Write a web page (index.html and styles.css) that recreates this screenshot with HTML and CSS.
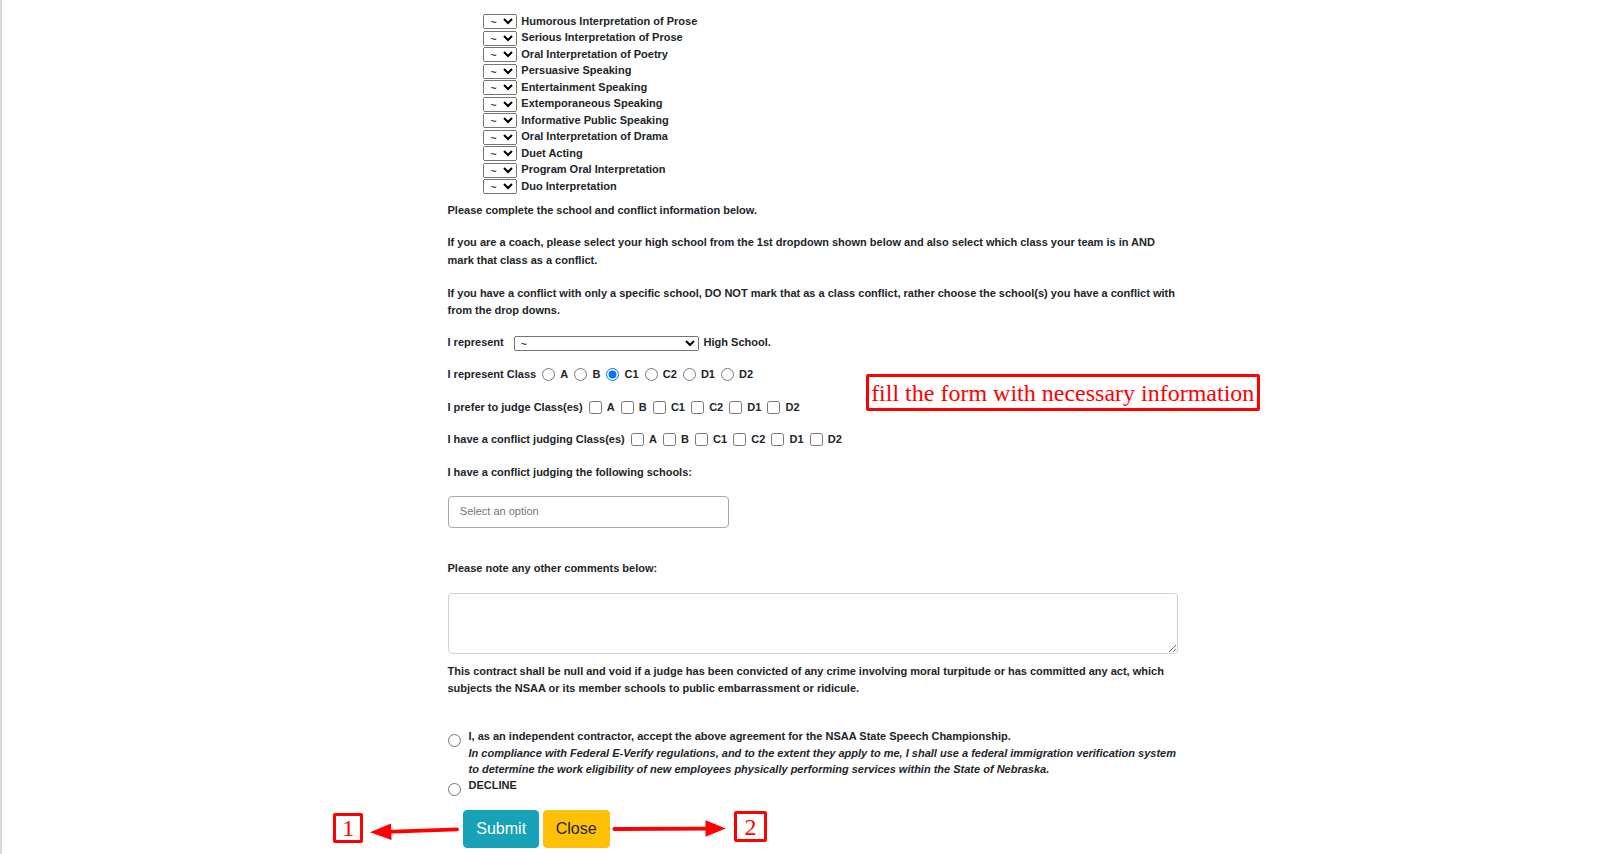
FILE: index.html
```html
<!DOCTYPE html>
<html lang="en">
<head>
<meta charset="utf-8">
<title>Judge Contract</title>
<link rel="stylesheet" href="styles.css">
</head>
<body>
<div class="page">
  <ul class="events">
    <li class="event"><select class="mini"><option>~</option></select><span>Humorous Interpretation of Prose</span></li>
    <li class="event"><select class="mini"><option>~</option></select><span>Serious Interpretation of Prose</span></li>
    <li class="event"><select class="mini"><option>~</option></select><span>Oral Interpretation of Poetry</span></li>
    <li class="event"><select class="mini"><option>~</option></select><span>Persuasive Speaking</span></li>
    <li class="event"><select class="mini"><option>~</option></select><span>Entertainment Speaking</span></li>
    <li class="event"><select class="mini"><option>~</option></select><span>Extemporaneous Speaking</span></li>
    <li class="event"><select class="mini"><option>~</option></select><span>Informative Public Speaking</span></li>
    <li class="event"><select class="mini"><option>~</option></select><span>Oral Interpretation of Drama</span></li>
    <li class="event"><select class="mini"><option>~</option></select><span>Duet Acting</span></li>
    <li class="event"><select class="mini"><option>~</option></select><span>Program Oral Interpretation</span></li>
    <li class="event"><select class="mini"><option>~</option></select><span>Duo Interpretation</span></li>
  </ul>

  <p class="para">Please complete the school and conflict information below.</p>
  <p class="para">If you are a coach, please select your high school from the 1st dropdown shown below and also select which class your team is in AND<br>mark that class as a conflict.</p>
  <p class="para tight">If you have a conflict with only a specific school, DO NOT mark that as a class conflict, rather choose the school(s) you have a conflict with<br>from the drop downs.</p>

  <div class="row row-school">
    <span>I represent</span>
    <select class="school"><option>~</option></select>
    <span class="after">High School.</span>
  </div>

  <div class="row">
    <span>I represent Class</span>
    <label class="opt"><input type="radio" name="cls"><span>A</span></label>
    <label class="opt"><input type="radio" name="cls"><span>B</span></label>
    <label class="opt"><input type="radio" name="cls" checked><span>C1</span></label>
    <label class="opt"><input type="radio" name="cls"><span>C2</span></label>
    <label class="opt"><input type="radio" name="cls"><span>D1</span></label>
    <label class="opt"><input type="radio" name="cls"><span>D2</span></label>
  </div>

  <div class="row">
    <span>I prefer to judge Class(es)</span>
    <label class="opt"><input type="checkbox"><span>A</span></label>
    <label class="opt"><input type="checkbox"><span>B</span></label>
    <label class="opt"><input type="checkbox"><span>C1</span></label>
    <label class="opt"><input type="checkbox"><span>C2</span></label>
    <label class="opt"><input type="checkbox"><span>D1</span></label>
    <label class="opt"><input type="checkbox"><span>D2</span></label>
  </div>

  <div class="row">
    <span>I have a conflict judging Class(es)</span>
    <label class="opt"><input type="checkbox"><span>A</span></label>
    <label class="opt"><input type="checkbox"><span>B</span></label>
    <label class="opt"><input type="checkbox"><span>C1</span></label>
    <label class="opt"><input type="checkbox"><span>C2</span></label>
    <label class="opt"><input type="checkbox"><span>D1</span></label>
    <label class="opt"><input type="checkbox"><span>D2</span></label>
  </div>

  <p class="para">I have a conflict judging the following schools:</p>

  <div class="multi"><span>Select an option</span></div>

  <p class="para">Please note any other comments below:</p>

  <textarea class="comments"></textarea>

  <p class="para contract">This contract shall be null and void if a judge has been convicted of any crime involving moral turpitude or has committed any act, which<br>subjects the NSAA or its member schools to public embarrassment or ridicule.</p>

  <div class="agree">
    <input type="radio" name="agree" class="agree-radio">
    <div class="agree-text">
      <div>I, as an independent contractor, accept the above agreement for the NSAA State Speech Championship.</div>
      <div class="ital">In compliance with Federal E-Verify regulations, and to the extent they apply to me, I shall use a federal immigration verification system<br>to determine the work eligibility of new employees physically performing services within the State of Nebraska.</div>
    </div>
  </div>
  <div class="agree decline">
    <input type="radio" name="agree" class="agree-radio">
    <div class="agree-text">
      <div>DECLINE</div>
    </div>
  </div>

  <div class="actions">
    <button class="btn btn-submit" type="button">Submit</button>
    <button class="btn btn-close" type="button">Close</button>
  </div>
</div>

<div class="overlay">
  <div class="note note-main">fill the form with necessary information</div>
  <div class="note note-num note-1">1</div>
  <div class="note note-num note-2">2</div>
  <svg class="arrows" width="1621" height="854" viewBox="0 0 1621 854">
    <line x1="455" y1="829.3" x2="384" y2="831.8" stroke="#ff0000" stroke-width="3.8" stroke-linecap="round"/>
    <polygon points="368,832.3 389,823.5 389.5,840" fill="#ff0000"/>
    <line x1="612.3" y1="829" x2="708" y2="828.6" stroke="#ff0000" stroke-width="3.8" stroke-linecap="round"/>
    <polygon points="723.7,828.5 703.5,820.2 703.5,836.8" fill="#ff0000"/>
  </svg>
</div>
</body>
</html>
```

FILE: styles.css
```css
html, body {
  margin: 0;
  padding: 0;
}

body {
  position: relative;
  min-height: 854px;
  background: #ffffff;
  border-left: 2px solid #dadada;
  font-family: "Liberation Sans", Arial, sans-serif;
  font-size: 11px;
  font-weight: bold;
  line-height: 17.6px;
  color: #212529;
}

.page {
  width: 730px;
  margin: 0 auto;
  padding-top: 13.25px;
}

.events {
  list-style: none;
  margin: 0 0 7.1px 35.8px;
  padding: 0;
}

.event {
  display: flex;
  align-items: center;
  height: 16.5px;
  gap: 4px;
}

.mini {
  width: 34px;
  height: 15px;
  margin: 0;
  padding: 0 0 0 2px;
  font-family: "Liberation Sans", Arial, sans-serif;
  font-size: 11px;
  font-weight: normal;
  color: #000;
}

.para {
  margin: 0 0 15px;
}

.tight {
  margin-bottom: 14.5px;
}

.row {
  display: flex;
  align-items: center;
  height: 17.6px;
  margin: 0 0 15px;
}

.row-school {
  margin-bottom: 14px;
}

.school {
  width: 185px;
  height: 15px;
  margin: 0 5px 0 9.8px;
  padding: 0 0 0 2px;
  font-family: "Liberation Sans", Arial, sans-serif;
  font-size: 11px;
  font-weight: normal;
  color: #000;
}

.opt {
  display: flex;
  align-items: center;
  margin-left: 6.05px;
}

.opt input {
  width: 13px;
  height: 13px;
  margin: 0 5.1px 0 0;
}

.multi {
  box-sizing: border-box;
  width: 281px;
  height: 32px;
  margin: 0 0 31.7px 0.5px;
  padding-left: 10.8px;
  display: flex;
  align-items: center;
  border: 1px solid #aaaaaa;
  border-radius: 4px;
  font-weight: normal;
  color: #757575;
}

.comments {
  display: block;
  box-sizing: border-box;
  width: 730px;
  height: 61.5px;
  margin: 0.6px 0 9.3px;
  border: 1px solid #cfd3d7;
  border-radius: 4px;
  background: #fff;
  resize: both;
}

.contract {
  line-height: 16.5px;
  margin-bottom: 32px;
}

.agree {
  display: flex;
  align-items: flex-start;
  line-height: 16.5px;
}

.decline {
  margin-top: -0.4px;
}

.agree-radio {
  width: 13px;
  height: 13px;
  margin: 5.8px 8px 0 0;
  flex: none;
}

.agree-text {
  white-space: nowrap;
}

.ital {
  font-style: italic;
}

.actions {
  display: flex;
  gap: 3.6px;
  margin-top: 13.8px;
  padding-left: 15.8px;
}

.btn {
  font-family: "Liberation Sans", Arial, sans-serif;
  font-size: 16px;
  font-weight: normal;
  line-height: 24px;
  padding: 6px 12px;
  border: 1px solid transparent;
  border-radius: 4px;
  cursor: pointer;
}

.btn-submit {
  background: #17a2b8;
  border-color: #17a2b8;
  color: #ffffff;
}

.btn-close {
  background: #ffc107;
  border-color: #ffc107;
  color: #212529;
}

.overlay {
  position: absolute;
  top: 0;
  left: 0;
  width: 1621px;
  height: 854px;
  pointer-events: none;
}

.note {
  position: absolute;
  box-sizing: border-box;
  display: flex;
  align-items: center;
  justify-content: center;
  border: 3.3px solid #ff0000;
  border-radius: 2px;
  color: #ff0000;
  font-family: "Liberation Serif", "Times New Roman", serif;
  font-weight: normal;
  font-size: 24px;
  line-height: 1;
  white-space: nowrap;
}

.note-main {
  left: 864px;
  top: 374px;
  width: 393.5px;
  height: 37px;
}

.note-1 {
  left: 331.3px;
  top: 813px;
  width: 30px;
  height: 30px;
}

.note-2 {
  left: 732.3px;
  top: 811px;
  width: 32.4px;
  height: 31px;
}

.arrows {
  position: absolute;
  top: 0;
  left: 0;
}
```
